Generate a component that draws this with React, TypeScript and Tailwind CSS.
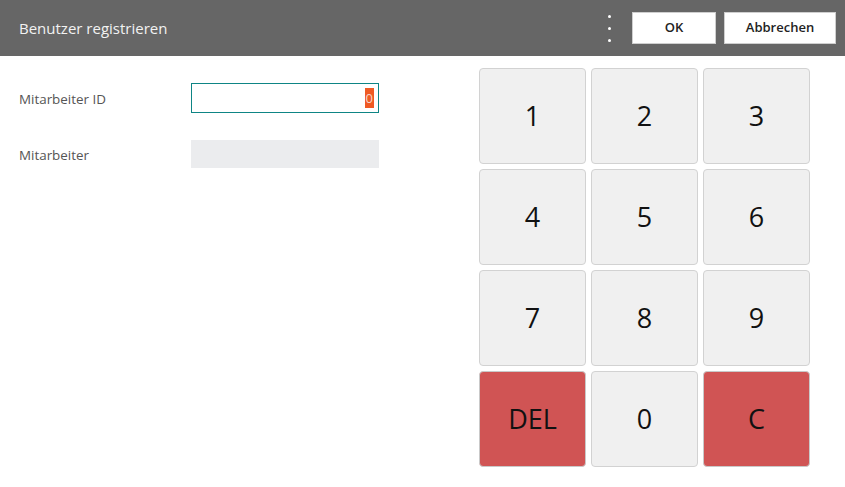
import React from "react";

const keys: { label: string; red?: boolean }[] = [
  { label: "1" },
  { label: "2" },
  { label: "3" },
  { label: "4" },
  { label: "5" },
  { label: "6" },
  { label: "7" },
  { label: "8" },
  { label: "9" },
  { label: "DEL", red: true },
  { label: "0" },
  { label: "C", red: true },
];

export default function App() {
  return (
    <div
      className="w-[845px] h-[487px] bg-white overflow-hidden"
      style={{ fontFamily: '"Open Sans", "Noto Sans", sans-serif' }}
    >
      <header className="h-[56px] bg-[#666666] flex items-center pl-[19px] pr-[9px]">
        <div className="text-[15px] text-[#f2f2f2] flex-1">Benutzer registrieren</div>
        <div className="flex flex-col items-center gap-[9px] mr-[21px]">
          <span className="w-[3px] h-[3px] rounded-full bg-white" />
          <span className="w-[3px] h-[3px] rounded-full bg-white" />
          <span className="w-[3px] h-[3px] rounded-full bg-white" />
        </div>
        <button className="w-[84px] h-[32px] bg-white border border-[#cfcfcf] text-[13px] font-semibold text-[#222] mr-[8px]">
          OK
        </button>
        <button className="w-[112px] h-[32px] bg-white border border-[#cfcfcf] text-[13px] font-semibold text-[#222]">
          Abbrechen
        </button>
      </header>
      <main className="flex">
        <section className="w-[479px] pl-[19px] pt-[27px] flex flex-col gap-[27px]">
          <div className="flex items-center">
            <div className="w-[172px] text-[13.4px] text-[#555] pt-[2px]">Mitarbeiter ID</div>
            <div className="w-[188px] h-[30px] border border-[#0e8585] flex items-center justify-end pr-[4px]">
              <span className="bg-[#ef5a24] text-[#f6d7cc] text-[13px] leading-[20px] h-[20px] px-[1px]">0</span>
            </div>
          </div>
          <div className="flex items-center">
            <div className="w-[172px] text-[13.4px] text-[#555] pt-[3px]">Mitarbeiter</div>
            <div className="w-[188px] h-[28px] bg-[#ebecee]" />
          </div>
        </section>
        <section className="pt-[12px] grid grid-cols-[107px_107px_107px] auto-rows-[96px] gap-[5px]">
          {keys.map((k) => (
            <button
              key={k.label}
              className={
                k.red
                  ? "rounded-[4px] border border-[#c9c9c9] bg-[#d05454] text-[27px] text-[#111] flex items-center justify-center"
                  : "rounded-[4px] border border-[#d2d2d2] bg-[#f0f0f0] text-[27px] text-[#111] flex items-center justify-center"
              }
            >
              {k.label}
            </button>
          ))}
        </section>
      </main>
    </div>
  );
}
